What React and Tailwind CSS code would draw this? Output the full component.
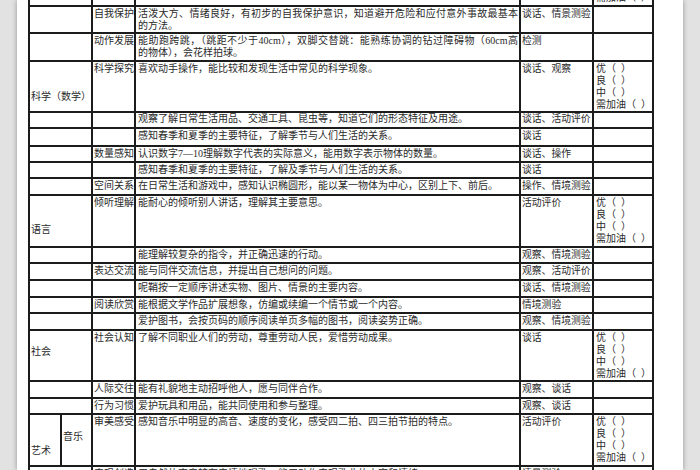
const grid = 'grid grid-cols-[32px_31px_43px_385px_73px_60px]';
const cell = 'border-r-2 border-b-2 border-[#1c1c1c] pl-[1px] leading-[12px] whitespace-nowrap';

const rating = ['优（\u00a0\u00a0）', '良（\u00a0\u00a0）', '中（\u00a0\u00a0）', '需加油（\u00a0\u00a0）'];

const rows = [
  { h: 52, rate: true },
  {
    h: 27,
    item: '自我保护',
    lines: ['活泼大方、情绪良好，有初步的自我保护意识，知道避开危险和应付意外事故最基本', '的方法。'],
    method: '谈话、情景测验',
  },
  {
    h: 28,
    item: '动作发展',
    lines: ['能助跑跨跳，（跳距不少于40cm），双脚交替跳：能熟练协调的钻过障碍物（60cm高', '的物体），会花样拍球。'],
    method: '检测',
  },
  {
    h: 50,
    cat: '科学（数学）',
    catPt: 'pt-[29px]',
    item: '科学探究',
    lines: ['喜欢动手操作，能比较和发现生活中常见的科学现象。'],
    method: '谈话、观察',
    rate: true,
  },
  { h: 17, lines: ['观察了解日常生活用品、交通工具、昆虫等，知道它们的形态特征及用途。'], method: '谈话、活动评价' },
  { h: 18, lines: ['感知春季和夏季的主要特征，了解季节与人们生活的关系。'], method: '谈话' },
  { h: 16, item: '数量感知', lines: ['认识数字7—10理解数字代表的实际意义，能用数字表示物体的数量。'], method: '谈话、操作' },
  { h: 16, lines: ['感知春季和夏季的主要特征，了解及季节与人们生活的关系。'], method: '谈话' },
  { h: 17, item: '空间关系', lines: ['在日常生活和游戏中，感知认识椭圆形，能以某一物体为中心，区别上下、前后。'], method: '操作、情境测验' },
  {
    h: 52,
    cat: '语言',
    catPt: 'pt-[28px]',
    item: '倾听理解',
    lines: ['能耐心的倾听别人讲话，理解其主要意思。'],
    method: '活动评价',
    rate: true,
  },
  { h: 16, lines: ['能理解较复杂的指令，并正确迅速的行动。'], method: '观察、情境测验' },
  { h: 17, item: '表达交流', lines: ['能与同伴交流信息，并提出自己想问的问题。'], method: '观察、活动评价' },
  { h: 17, lines: ['呢鞘按一定顺序讲述实物、图片、情景的主要内容。'], method: '谈话、情境测验' },
  { h: 16, item: '阅读欣赏', lines: ['能根据文学作品扩展想象，仿编或续编一个情节或一个内容。'], method: '情境测验' },
  { h: 17, lines: ['爱护图书，会按页码的顺序阅读单页多幅的图书，阅读姿势正确。'], method: '观察、情境测验' },
  {
    h: 51,
    cat: '社会',
    catPt: 'pt-[15px]',
    item: '社会认知',
    lines: ['了解不同职业人们的劳动，尊重劳动人民，爱惜劳动成果。'],
    method: '谈话',
    rate: true,
  },
  { h: 17, item: '人际交往', lines: ['能有礼貌地主动招呼他人，愿与同伴合作。'], method: '观察、谈话' },
  { h: 16, item: '行为习惯', lines: ['爱护玩具和用品，能共同使用和参与整理。'], method: '观察、谈话' },
  {
    h: 52,
    cat: '艺术',
    catPt: 'pt-[30px]',
    sub: '音乐',
    subPt: 'pt-[16px]',
    item: '审美感受',
    lines: ['感知音乐中明显的高音、速度的变化，感受四二拍、四三拍节拍的特点。'],
    method: '活动评价',
    rate: true,
  },
  {
    h: 40,
    item: '表现创造',
    lines: ['用自然的声音较有表情地唱歌，能用动作表现歌曲的内容和情绪。'],
    method: '情景测验',
  },
];

function Row({ row }) {
  const hClass = {
    16: 'h-[16px]',
    17: 'h-[17px]',
    18: 'h-[18px]',
    27: 'h-[27px]',
    28: 'h-[28px]',
    40: 'h-[40px]',
    50: 'h-[50px]',
    51: 'h-[51px]',
    52: 'h-[52px]',
  }[row.h];

  return (
    <div className={`${grid} ${hClass}`}>
      {row.sub ? (
        <>
          <div className={`${cell} ${row.catPt || ''}`}>{row.cat}</div>
          <div className={`${cell} ${row.subPt || ''}`}>{row.sub}</div>
        </>
      ) : (
        <div className={`${cell} col-span-2 ${row.catPt || 'pt-[1px]'}`}>{row.cat}</div>
      )}
      <div className={`${cell} pt-[1px]`}>{row.item}</div>
      <div className={`${cell} pt-[1px] pl-[2px]`}>
        {(row.lines || []).map((line, i) => (
          <div
            key={i}
            className={i === 0 && row.lines.length > 1 ? 'text-justify [text-align-last:justify] pr-[1px]' : ''}
          >
            {line}
          </div>
        ))}
      </div>
      <div className={`${cell} pt-[1px] text-[9.8px]`}>{row.method}</div>
      <div className={`${cell} pt-[1px] pl-[2px] leading-[11.7px]`}>
        {row.rate ? rating.map((r) => <div key={r}>{r}</div>) : null}
      </div>
    </div>
  );
}

export default function App() {
  return (
    <div className="flex h-[470px] w-[700px] overflow-hidden bg-[#e2e2e2]">
      <div className="ml-[17px] h-full w-[666px] overflow-hidden bg-white pl-[11px] shadow-[0_0_5px_rgba(0,0,0,0.35)]">
        <div className="-mt-[45px] w-[626px] border-l-2 border-[#1c1c1c] font-['Liberation_Serif','Noto_Sans_CJK_SC',serif] text-[10px] text-[#2a2a2a]">
          {rows.map((row, i) => (
            <Row key={i} row={row} />
          ))}
        </div>
      </div>
    </div>
  );
}
